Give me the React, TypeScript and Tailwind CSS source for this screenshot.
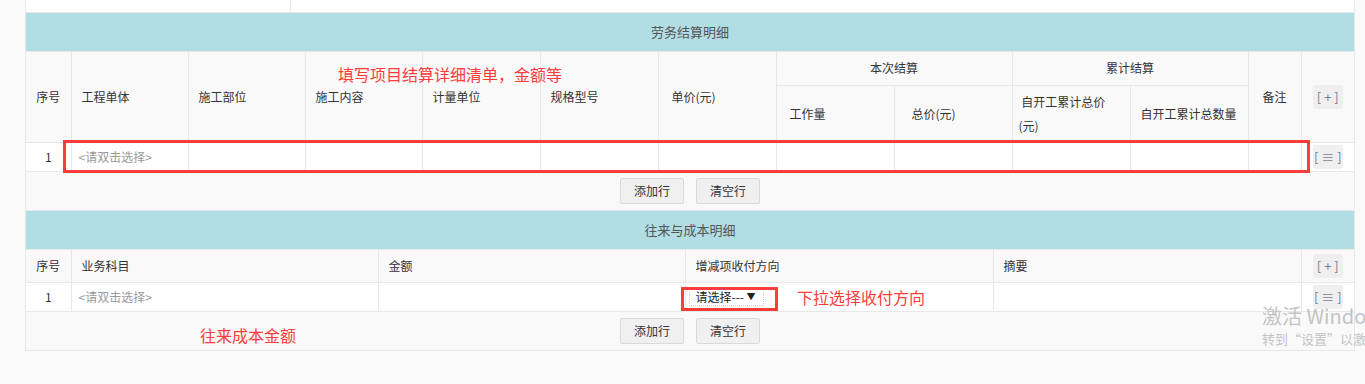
import React from 'react';

const bd = 'border border-[#e8e8e8]';
const thBase = `${bd} bg-[#f9f9f9] text-[12px] text-[#333] font-normal align-middle`;
const th = `${thBase} text-left px-[10px]`;
const thC = `${thBase} text-center px-0`;
const td = `${bd} bg-white text-[12px] text-[#333] h-[29px] p-0`;

const SectionTitle: React.FC<{ title: string }> = ({ title }) => (
  <div className="h-[39px] bg-[#b1dee4] border-b border-[#e8e8e8] flex items-center justify-center text-[13px] text-[#555]">
    {title}
  </div>
);

const MiniBtn: React.FC<{ label: string }> = ({ label }) => (
  <span className="inline-flex items-center justify-center w-[30px] h-[24px] rounded-[3px] bg-[#efefef] text-[13px] text-[#7a7f8c] whitespace-pre">
    {label}
  </span>
);

const ActionRow: React.FC = () => (
  <div className="h-[39px] flex items-center justify-center gap-[12px] border-b border-[#e8e8e8] bg-[#f9f9f9]">
    <button className="w-[64px] h-[26px] bg-[#f0f0f0] border border-[#d9d9d9] rounded-[2px] text-[12px] text-[#333]">添加行</button>
    <button className="w-[64px] h-[26px] bg-[#f0f0f0] border border-[#d9d9d9] rounded-[2px] text-[12px] text-[#333]">清空行</button>
  </div>
);

export default function App() {
  const font = { fontFamily: '"Noto Sans CJK SC", "Noto Sans", sans-serif' };
  return (
    <div className="w-[1365px] h-[384px] bg-[#fafafa] overflow-hidden relative" style={font}>
      <div className="ml-[25px] w-[1330px] border-x border-[#e8e8e8] bg-[#f9f9f9] relative">
        {/* top strip */}
        <div className="h-[13px] flex bg-white border-b border-[#e8e8e8]">
          <div className="w-[265px] border-r border-[#e8e8e8]" />
          <div className="flex-1" />
        </div>

        <SectionTitle title="劳务结算明细" />

        <table className="w-full table-fixed border-collapse">
          <colgroup>
            <col className="w-[45px]" />
            <col className="w-[117px]" />
            <col className="w-[117px]" />
            <col className="w-[117px]" />
            <col className="w-[118px]" />
            <col className="w-[118px]" />
            <col className="w-[118px]" />
            <col className="w-[118px]" />
            <col className="w-[118px]" />
            <col className="w-[118px]" />
            <col className="w-[118px]" />
            <col className="w-[53px]" />
            <col className="w-[53px]" />
          </colgroup>
          <thead>
            <tr className="h-[33px]">
              <th rowSpan={2} className={`${thC} border-t-0 border-l-0`}>序号</th>
              <th rowSpan={2} className={`${th} border-t-0`}>工程单体</th>
              <th rowSpan={2} className={`${th} border-t-0`}>施工部位</th>
              <th rowSpan={2} className={`${th} border-t-0`}>施工内容</th>
              <th rowSpan={2} className={`${th} border-t-0`}>计量单位</th>
              <th rowSpan={2} className={`${th} border-t-0`}>规格型号</th>
              <th rowSpan={2} className={`${th} border-t-0 pl-[13px]`}>单价(元)</th>
              <th colSpan={2} className={`${thC} border-t-0`}>本次结算</th>
              <th colSpan={2} className={`${thC} border-t-0`}>累计结算</th>
              <th rowSpan={2} className={`${thC} border-t-0`}>备注</th>
              <th rowSpan={2} className={`${thC} border-t-0 border-r-0`}>
                <MiniBtn label="[ + ]" />
              </th>
            </tr>
            <tr className="h-[57px]">
              <th className={`${th} pl-[13px]`}>工作量</th>
              <th className={`${th} pl-[17px]`}>总价(元)</th>
              <th className={`${th} leading-[24px] pl-[6px]`}>&nbsp;自开工累计总价(元)</th>
              <th className={th}>自开工累计总数量</th>
            </tr>
          </thead>
          <tbody>
            <tr>
              <td className={`${td} bg-[#f9f9f9] text-center border-l-0`}>1</td>
              <td className={`${td} pl-[7px] text-[#999]`}>&lt;请双击选择&gt;</td>
              <td className={td} />
              <td className={td} />
              <td className={td} />
              <td className={td} />
              <td className={td} />
              <td className={td} />
              <td className={td} />
              <td className={td} />
              <td className={td} />
              <td className={`${td} bg-[#f9f9f9] px-[4px]`}>
                <div className="h-[27px] bg-white" />
              </td>
              <td className={`${td} bg-[#f9f9f9] text-center border-r-0`}>
                <MiniBtn label="[ ≡ ]" />
              </td>
            </tr>
          </tbody>
        </table>

        <ActionRow />

        <SectionTitle title="往来与成本明细" />

        <table className="w-full table-fixed border-collapse">
          <colgroup>
            <col className="w-[45px]" />
            <col className="w-[307px]" />
            <col className="w-[307px]" />
            <col className="w-[308px]" />
            <col className="w-[308px]" />
            <col className="w-[53px]" />
          </colgroup>
          <thead>
            <tr className="h-[33px]">
              <th className={`${thC} border-t-0 border-l-0`}>序号</th>
              <th className={`${th} border-t-0`}>业务科目</th>
              <th className={`${th} border-t-0`}>金额</th>
              <th className={`${th} border-t-0`}>增减项收付方向</th>
              <th className={`${th} border-t-0`}>摘要</th>
              <th className={`${thC} border-t-0 border-r-0`}>
                <MiniBtn label="[ + ]" />
              </th>
            </tr>
          </thead>
          <tbody>
            <tr>
              <td className={`${td} bg-[#f9f9f9] text-center border-l-0`}>1</td>
              <td className={`${td} pl-[7px] text-[#999]`}>&lt;请双击选择&gt;</td>
              <td className={td} />
              <td className={`${td} pl-[3px]`}>
                <div className="w-[75px] h-[18px] border border-dotted border-[#ccc] bg-white flex items-center justify-between pl-[6px] pr-[7px] text-[12px] text-[#222]">
                  <span>请选择---</span>
                  <span className="text-[9px]">▼</span>
                </div>
              </td>
              <td className={td} />
              <td className={`${td} bg-[#f9f9f9] text-center border-r-0`}>
                <MiniBtn label="[ ≡ ]" />
              </td>
            </tr>
          </tbody>
        </table>

        <ActionRow />
      </div>

      {/* annotations */}
      <div className="absolute left-[63px] top-[140px] w-[1247px] h-[33px] border-[3px] border-[#ff3b3b] pointer-events-none" />
      <div className="absolute left-[338px] top-[64px] text-[16px] text-[#ff3b3b] leading-[20px]">填写项目结算详细清单，金额等</div>
      <div className="absolute left-[681px] top-[287px] w-[97px] h-[24px] border-[3px] border-[#ff3b3b] pointer-events-none" />
      <div className="absolute left-[797px] top-[287px] text-[16px] text-[#ff3b3b] leading-[20px]">下拉选择收付方向</div>
      <div className="absolute left-[200px] top-[325px] text-[16px] text-[#ff3b3b] leading-[20px]">往来成本金额</div>

      {/* windows watermark */}
      <div className="absolute left-[1262px] top-[303px] text-[20px] text-[#c4c4c4] leading-[26px] whitespace-nowrap">激活 Windows</div>
      <div className="absolute left-[1262px] top-[330px] text-[13px] text-[#c4c4c4] leading-[18px] whitespace-nowrap">转到“设置”以激活 Windows。</div>
    </div>
  );
}
